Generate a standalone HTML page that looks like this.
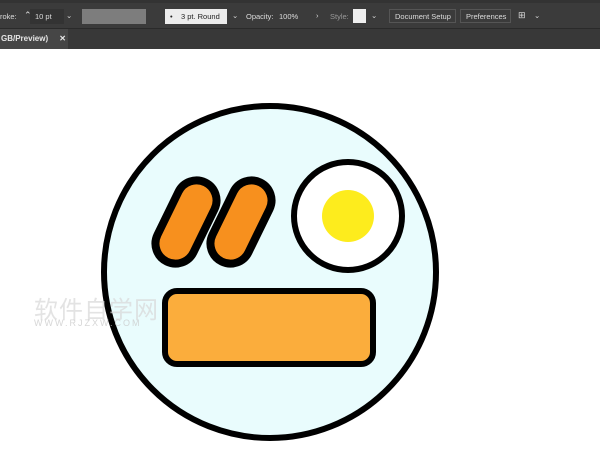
<!DOCTYPE html>
<html><head><meta charset="utf-8"><style>
*{margin:0;padding:0;box-sizing:border-box}
body{width:600px;height:459px;overflow:hidden;background:#fff;font-family:"Liberation Sans",sans-serif;position:relative}
.tb{position:absolute;left:0;top:0;width:600px;height:29px;background:#3b3b3b;border-top:3px solid #333;border-bottom:1px solid #2a2a2a}
.tb *{position:absolute;font-size:7.5px;color:#ddd;white-space:nowrap}
.tabs{position:absolute;left:0;top:29px;width:600px;height:20px;background:#383838}
.tab{position:absolute;left:0;top:0;width:68px;height:20px;background:#464646;color:#e6e6e6;font-size:8px;font-weight:bold;padding:5px 0 0 1px}
.box{border:1px solid #555;height:14px;top:6px}
</style></head><body>
<div class="tb">
<span style="left:0;top:9px">roke:</span>
<span style="left:24px;top:7px;font-size:9px">⌃</span>
<div style="left:30px;top:6px;width:34px;height:15px;background:#333"></div>
<span style="left:35px;top:9px">10 pt</span>
<span style="left:66px;top:8px">⌄</span>
<div style="left:82px;top:6px;width:64px;height:15px;background:#7d7d7d"></div>
<div style="left:165px;top:6px;width:62px;height:15px;background:#ececec"></div>
<span style="left:170px;top:9px;color:#222">•&nbsp;&nbsp;&nbsp; 3 pt. Round</span>
<span style="left:232px;top:8px">⌄</span>
<span style="left:246px;top:9px">Opacity:</span>
<span style="left:279px;top:9px">100%</span>
<span style="left:316px;top:8px">›</span>
<span style="left:330px;top:9px;color:#999">Style:</span>
<div style="left:353px;top:6px;width:13px;height:14px;background:#eee"></div>
<span style="left:371px;top:8px">⌄</span>
<div class="box" style="left:389px;width:67px"></div>
<span style="left:395px;top:9px">Document Setup</span>
<div class="box" style="left:460px;width:51px"></div>
<span style="left:466px;top:9px">Preferences</span>
<span style="left:518px;top:7px;font-size:9px">⊞</span>
<span style="left:534px;top:8px">⌄</span>
</div>
<div class="tabs"><div class="tab">GB/Preview)&nbsp;&nbsp;&nbsp;&nbsp; ✕</div></div>
<svg style="position:absolute;left:0;top:0" width="600" height="459">
<circle cx="270" cy="272" r="166" fill="#e9fcfd" stroke="#000" stroke-width="6"/>
<g transform="rotate(26 186 222)"><rect x="166" y="178" width="40" height="88" rx="20" fill="#f7901e" stroke="#000" stroke-width="8"/></g>
<g transform="rotate(26 241 222)"><rect x="221" y="178" width="40" height="88" rx="20" fill="#f7901e" stroke="#000" stroke-width="8"/></g>
<circle cx="348" cy="216" r="54" fill="#fff" stroke="#000" stroke-width="6"/>
<circle cx="348" cy="216" r="26" fill="#fdec1d"/>
<rect x="165" y="291" width="208" height="73" rx="12" fill="#fbad3c" stroke="#000" stroke-width="6"/>
</svg>
<div style="position:absolute;left:34px;top:290px;font:24px 'Liberation Sans','Noto Sans CJK SC',sans-serif;color:rgba(215,215,215,.7);letter-spacing:1px">软件自学网</div>
<div style="position:absolute;left:34px;top:318px;font:9px 'Liberation Sans',sans-serif;color:rgba(200,200,200,.75);letter-spacing:2px">WWW.RJZXW.COM</div>
</body></html>
